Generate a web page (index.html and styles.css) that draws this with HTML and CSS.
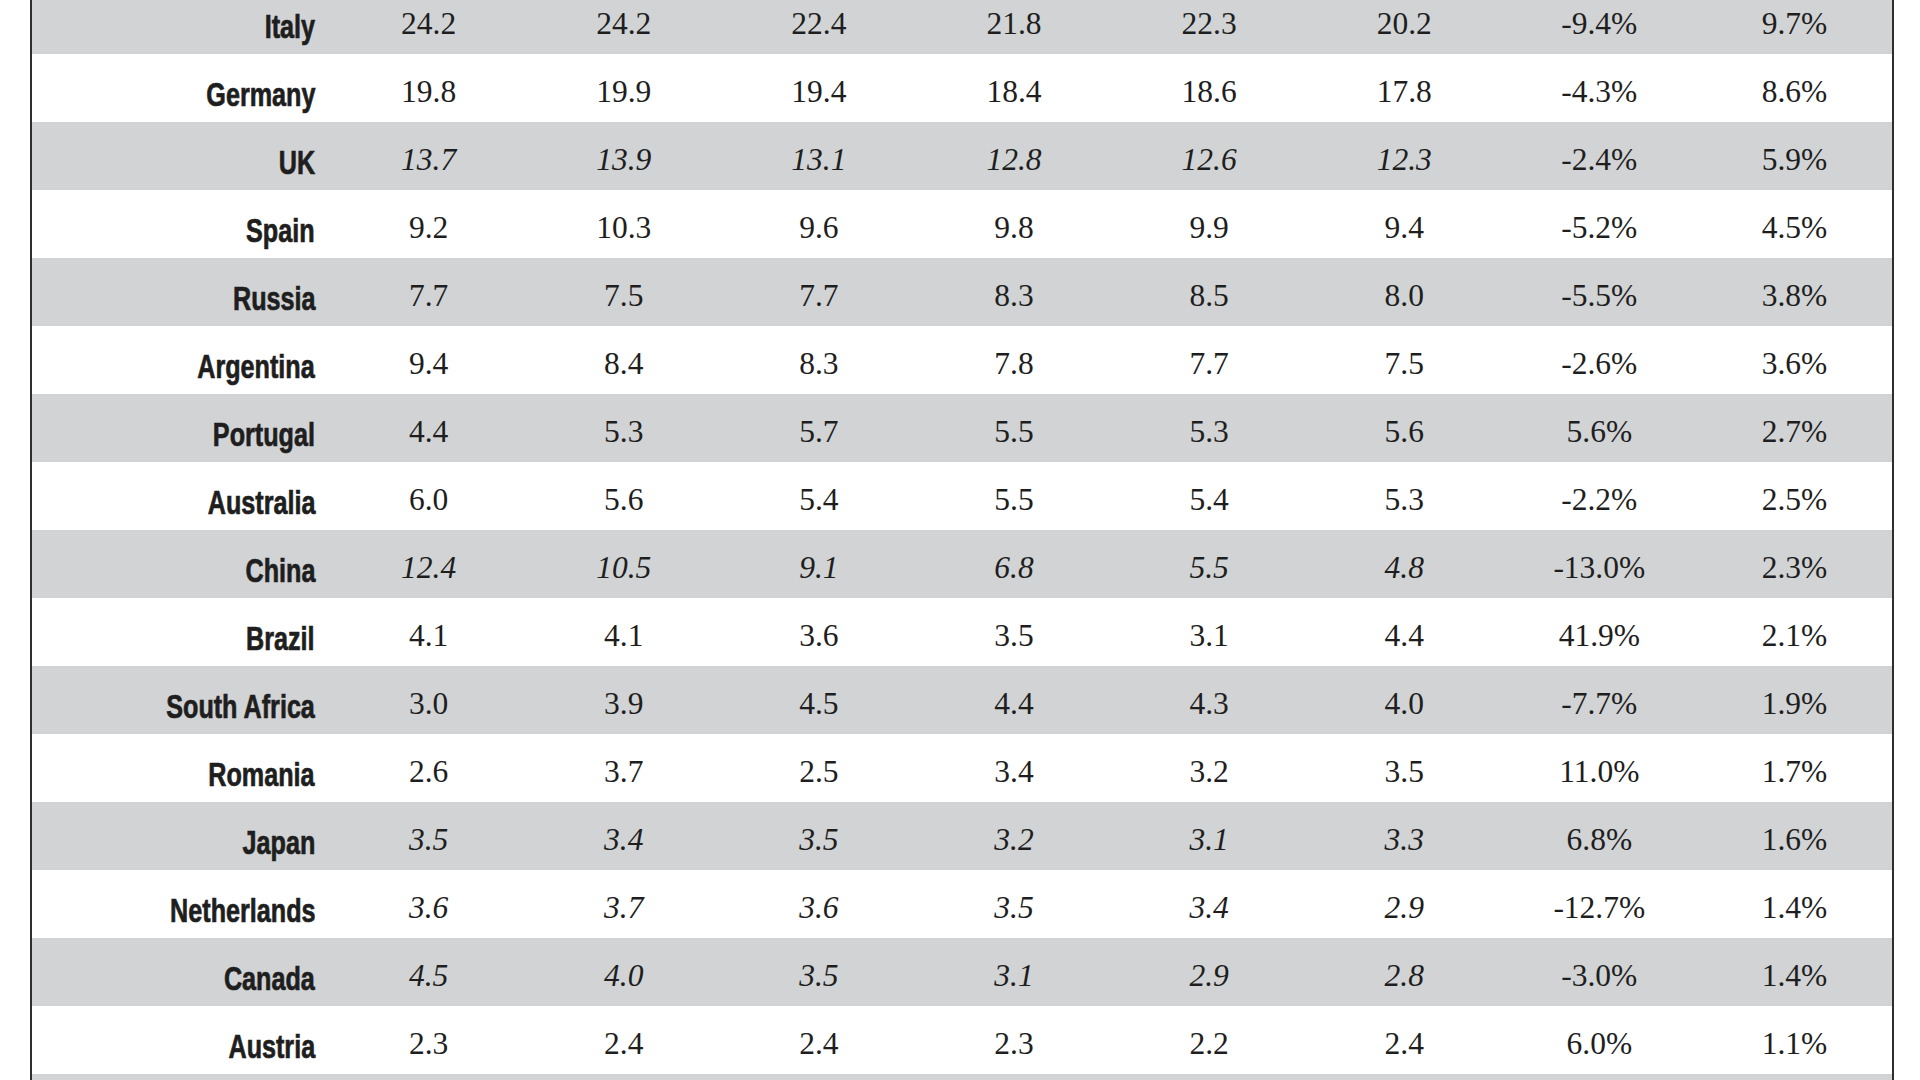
FILE: index.html
```html
<!DOCTYPE html>
<html lang="en">
<head>
<meta charset="utf-8">
<title>Table</title>
<link rel="stylesheet" href="styles.css">
</head>
<body>
<div class="table">
  <div class="row shaded"><div class="country"><span>Italy</span></div><div class="num">24.2</div><div class="num">24.2</div><div class="num">22.4</div><div class="num">21.8</div><div class="num">22.3</div><div class="num">20.2</div><div class="num">-9.4%</div><div class="num">9.7%</div></div>
  <div class="row"><div class="country"><span>Germany</span></div><div class="num">19.8</div><div class="num">19.9</div><div class="num">19.4</div><div class="num">18.4</div><div class="num">18.6</div><div class="num">17.8</div><div class="num">-4.3%</div><div class="num">8.6%</div></div>
  <div class="row shaded est"><div class="country"><span>UK</span></div><div class="num">13.7</div><div class="num">13.9</div><div class="num">13.1</div><div class="num">12.8</div><div class="num">12.6</div><div class="num">12.3</div><div class="num pct">-2.4%</div><div class="num pct">5.9%</div></div>
  <div class="row"><div class="country"><span>Spain</span></div><div class="num">9.2</div><div class="num">10.3</div><div class="num">9.6</div><div class="num">9.8</div><div class="num">9.9</div><div class="num">9.4</div><div class="num">-5.2%</div><div class="num">4.5%</div></div>
  <div class="row shaded"><div class="country"><span>Russia</span></div><div class="num">7.7</div><div class="num">7.5</div><div class="num">7.7</div><div class="num">8.3</div><div class="num">8.5</div><div class="num">8.0</div><div class="num">-5.5%</div><div class="num">3.8%</div></div>
  <div class="row"><div class="country"><span>Argentina</span></div><div class="num">9.4</div><div class="num">8.4</div><div class="num">8.3</div><div class="num">7.8</div><div class="num">7.7</div><div class="num">7.5</div><div class="num">-2.6%</div><div class="num">3.6%</div></div>
  <div class="row shaded"><div class="country"><span>Portugal</span></div><div class="num">4.4</div><div class="num">5.3</div><div class="num">5.7</div><div class="num">5.5</div><div class="num">5.3</div><div class="num">5.6</div><div class="num">5.6%</div><div class="num">2.7%</div></div>
  <div class="row"><div class="country"><span>Australia</span></div><div class="num">6.0</div><div class="num">5.6</div><div class="num">5.4</div><div class="num">5.5</div><div class="num">5.4</div><div class="num">5.3</div><div class="num">-2.2%</div><div class="num">2.5%</div></div>
  <div class="row shaded est"><div class="country"><span>China</span></div><div class="num">12.4</div><div class="num">10.5</div><div class="num">9.1</div><div class="num">6.8</div><div class="num">5.5</div><div class="num">4.8</div><div class="num pct">-13.0%</div><div class="num pct">2.3%</div></div>
  <div class="row"><div class="country"><span>Brazil</span></div><div class="num">4.1</div><div class="num">4.1</div><div class="num">3.6</div><div class="num">3.5</div><div class="num">3.1</div><div class="num">4.4</div><div class="num">41.9%</div><div class="num">2.1%</div></div>
  <div class="row shaded"><div class="country"><span>South Africa</span></div><div class="num">3.0</div><div class="num">3.9</div><div class="num">4.5</div><div class="num">4.4</div><div class="num">4.3</div><div class="num">4.0</div><div class="num">-7.7%</div><div class="num">1.9%</div></div>
  <div class="row"><div class="country"><span>Romania</span></div><div class="num">2.6</div><div class="num">3.7</div><div class="num">2.5</div><div class="num">3.4</div><div class="num">3.2</div><div class="num">3.5</div><div class="num">11.0%</div><div class="num">1.7%</div></div>
  <div class="row shaded est"><div class="country"><span>Japan</span></div><div class="num">3.5</div><div class="num">3.4</div><div class="num">3.5</div><div class="num">3.2</div><div class="num">3.1</div><div class="num">3.3</div><div class="num pct">6.8%</div><div class="num pct">1.6%</div></div>
  <div class="row est"><div class="country"><span>Netherlands</span></div><div class="num">3.6</div><div class="num">3.7</div><div class="num">3.6</div><div class="num">3.5</div><div class="num">3.4</div><div class="num">2.9</div><div class="num pct">-12.7%</div><div class="num pct">1.4%</div></div>
  <div class="row shaded est"><div class="country"><span>Canada</span></div><div class="num">4.5</div><div class="num">4.0</div><div class="num">3.5</div><div class="num">3.1</div><div class="num">2.9</div><div class="num">2.8</div><div class="num pct">-3.0%</div><div class="num pct">1.4%</div></div>
  <div class="row"><div class="country"><span>Austria</span></div><div class="num">2.3</div><div class="num">2.4</div><div class="num">2.4</div><div class="num">2.3</div><div class="num">2.2</div><div class="num">2.4</div><div class="num">6.0%</div><div class="num">1.1%</div></div>
  <div class="row shaded"></div>
</div>
</body>
</html>
```
FILE: styles.css
```css
html, body {
  margin: 0;
  padding: 0;
  background: #ffffff;
  overflow: hidden;
}

body {
  height: 1080px;
}

.table {
  margin: -14px 0 0 30px;
  width: 1860px;
  border-left: 2px solid #2e2e2e;
  border-right: 2px solid #2e2e2e;
  color: #1e1e1e;
}

.row {
  display: grid;
  grid-template-columns: 299px repeat(8, 1fr);
  height: 68px;
  background: #ffffff;
}

.row.shaded {
  background: #d1d3d4;
}

.country {
  display: flex;
  align-items: center;
  justify-content: flex-end;
  padding: 12px 16px 0 0;
  box-sizing: border-box;
  height: 68px;
  font-family: "Liberation Sans", Arial, sans-serif;
  font-weight: 700;
  font-size: 34px;
  line-height: 38px;
}

.country span {
  display: inline-block;
  transform: scaleX(0.74);
  transform-origin: right center;
  white-space: nowrap;
  -webkit-text-stroke: 0.7px #1e1e1e;
}

.num {
  display: flex;
  align-items: center;
  justify-content: center;
  padding-top: 8px;
  box-sizing: border-box;
  height: 68px;
  font-family: "Liberation Serif", "Times New Roman", serif;
  font-size: 31.5px;
  line-height: 34px;
  white-space: nowrap;
}

.est .num {
  font-style: italic;
}

.est .num.pct {
  font-style: normal;
}
```
